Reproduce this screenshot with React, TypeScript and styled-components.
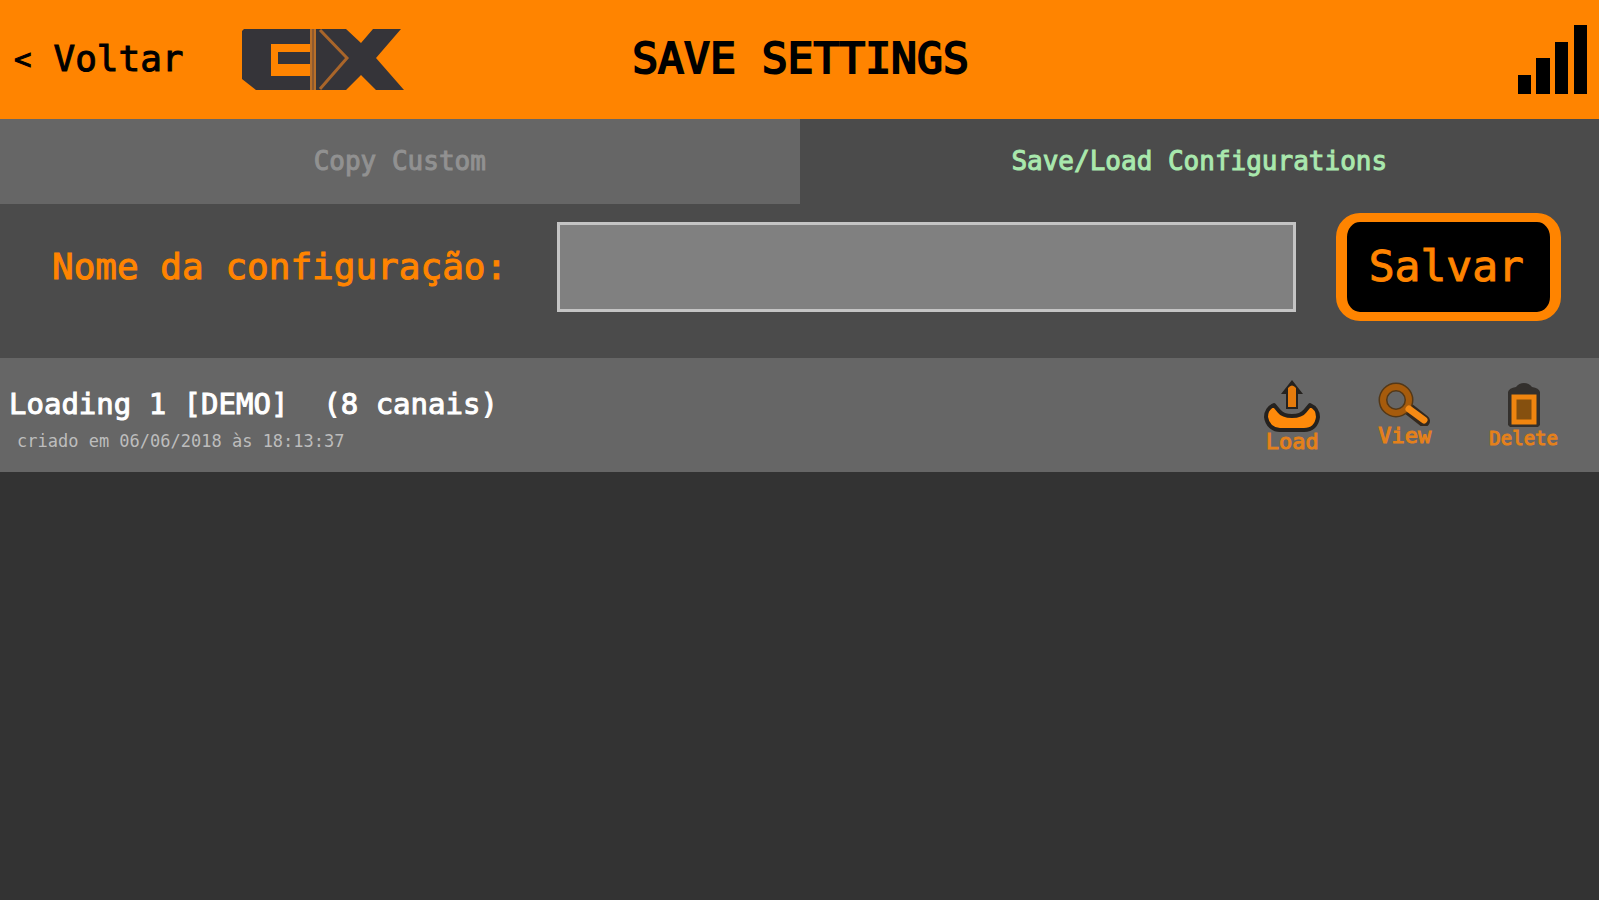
import React, { useState } from "react";
import styled, { createGlobalStyle } from "styled-components";

const orange = "#ff8400";

const GlobalStyle = createGlobalStyle`
  *, *::before, *::after { box-sizing: border-box; }
  body {
    margin: 0;
    background: #333333;
    font-family: "DejaVu Sans Mono", "Liberation Mono", monospace;
  }
  button, input { font-family: inherit; }
`;

const Screen = styled.div`
  display: flex;
  flex-direction: column;
  min-height: 100vh;
  -webkit-text-stroke: 1px currentColor;
`;

const Header = styled.header`
  display: grid;
  grid-template-columns: 1fr auto 1fr;
  align-items: center;
  height: 119px;
  padding: 0 12px 0 14px;
  background: ${orange};
  color: #000000;
`;

const HeaderStart = styled.div`
  display: flex;
  align-items: center;
  gap: 58px;
`;

const BackLink = styled.a`
  display: flex;
  align-items: center;
  gap: 22px;
  padding-bottom: 2px;
  color: inherit;
  font-size: 36px;
  line-height: 42px;
  text-decoration: none;
`;

const BackArrow = styled.span`
  font-size: 29px;
`;

const Title = styled.h1`
  margin: 0;
  padding-bottom: 4px;
  font-size: 43px;
  font-weight: normal;
  line-height: 50px;
  -webkit-text-stroke-width: 2px;
`;

const HeaderEnd = styled.div`
  display: flex;
  justify-content: flex-end;
`;

const Tabs = styled.div`
  display: grid;
  grid-template-columns: 1fr 1fr;
  background: #4b4b4b;
`;

const Tab = styled.button<{ $active: boolean }>`
  padding: 27px 0 28px;
  border: 0;
  background: ${({ $active }) => ($active ? "#4b4b4b" : "#666666")};
  color: ${({ $active }) => ($active ? "#a9e8ad" : "#919191")};
  font-size: 26px;
  line-height: 30px;
  cursor: pointer;
`;

const SaveForm = styled.form`
  display: flex;
  align-items: center;
  padding: 9px 38px 37px 52px;
  background: #4b4b4b;
`;

const NameLabel = styled.label`
  flex: none;
  margin-right: 50px;
  color: ${orange};
  font-size: 36px;
  line-height: 42px;
`;

const NameInput = styled.input`
  flex: 1;
  min-width: 0;
  height: 90px;
  padding: 0 20px;
  border: 3px solid #c4c4c4;
  outline: 0;
  background: #808080;
  color: #ffffff;
  font-size: 36px;
`;

const SaveButton = styled.button`
  flex: none;
  margin-left: 40px;
  padding: 19px 26px 21px 22px;
  border: solid ${orange};
  border-width: 9px 11px;
  border-radius: 24px;
  background: #000000;
  color: ${orange};
  font-size: 43px;
  line-height: 50px;
  cursor: pointer;
`;

const ConfigList = styled.ul`
  margin: 0;
  padding: 0;
  list-style: none;
`;

const ConfigRow = styled.li`
  display: flex;
  justify-content: space-between;
  padding: 22px 41px 20px 9px;
  background: #666666;
`;

const ConfigInfo = styled.div`
  display: flex;
  flex-direction: column;
  gap: 10px;
  padding-top: 7px;
`;

const ConfigName = styled.span`
  color: #ffffff;
  font-size: 29px;
  line-height: 34px;
  white-space: pre;
`;

const ConfigDate = styled.span`
  padding-left: 8px;
  color: #bdbdbd;
  font-size: 17px;
  line-height: 20px;
  -webkit-text-stroke-width: 0;
`;

const Actions = styled.div`
  display: flex;
  align-items: flex-start;
  gap: 58px;
`;

const ActionButton = styled.button<{ $compact?: boolean }>`
  display: flex;
  flex-direction: column;
  align-items: center;
  padding: 0;
  border: 0;
  background: none;
  color: #e5811a;
  font-size: ${({ $compact }) => ($compact ? 19 : 22)}px;
  line-height: 20px;
  cursor: pointer;
`;

const Logo = () => (
  <svg width="162" height="61" viewBox="0 0 162 61" role="img" aria-label="EX">
    <path
      fill="#353439"
      d="M2 0H104L119 14L131 0H159L134 29L162 61H134L119 46L104 61H14L0 50V2Z"
    />
    <path fill={orange} d="M29 15H69V23H36V35H69V47H29Z" />
    <path fill="none" stroke="#8d5a30" strokeWidth="6" d="M71 0V61" />
    <path fill="none" stroke="#b96f28" strokeWidth="2" d="M69 0V61M73 0V61" />
    <path fill="none" stroke="#a9652a" strokeWidth="3" d="M78 1L105 29L78 60" />
  </svg>
);

const SignalBars = () => (
  <svg width="69" height="69" viewBox="0 0 69 69" role="img" aria-label="Signal">
    <path d="M0 50H13V69H0ZM18 33H32V69H18ZM37 17H50V69H37ZM56 0H69V69H56Z" />
  </svg>
);

const LoadIcon = () => (
  <svg width="56" height="52" viewBox="0 0 56 52" aria-hidden="true">
    <path
      fill="#ff8a0a"
      stroke="#25221f"
      strokeWidth="4"
      strokeLinejoin="round"
      d="M10 25C5 27 2 32 2 37C3 45 9 50 16 50H40C48 50 53 45 54 37C54 32 51 27 46 25L41 31C38 35 34 36 28 36C22 36 18 35 15 31Z"
    />
    <path fill="#25221f" d="M28 0L39 14H34V29H22V14H17Z" />
    <path fill="#e57b0c" d="M24 8Q28 3 32 8V27H24Z" />
  </svg>
);

const ViewIcon = () => (
  <svg width="53" height="46" viewBox="0 0 53 46" aria-hidden="true">
    <path stroke="#33291f" strokeWidth="12" strokeLinecap="round" d="M32 30L46 41" />
    <circle cx="18" cy="20" r="13" fill="none" stroke="#543817" strokeWidth="9" />
    <circle cx="18" cy="20" r="13" fill="none" stroke="#a65b0c" strokeWidth="6" />
    <path stroke="#f58a14" strokeWidth="7" strokeLinecap="round" d="M31 29L46 40" />
  </svg>
);

const DeleteIcon = () => (
  <svg width="32" height="48" viewBox="0 0 32 48" aria-hidden="true">
    <path fill="#33302d" d="M0 12Q1 8 8 7Q11 3 16 3Q21 3 24 7Q31 8 32 12V45L30 47H2L0 45Z" />
    <rect x="6" y="17" width="20" height="25" fill="#85500f" stroke="#f0850f" strokeWidth="5" />
  </svg>
);

const tabs = ["Copy Custom", "Save/Load Configurations"];

const configs = [
  { name: "Loading 1 [DEMO]  (8 canais)", created: "criado em 06/06/2018 às 18:13:37" },
];

export default function App() {
  const [activeTab, setActiveTab] = useState(1);
  const [name, setName] = useState("");

  return (
    <Screen>
      <GlobalStyle />
      <Header>
        <HeaderStart>
          <BackLink href="#">
            <BackArrow>&lt;</BackArrow>
            Voltar
          </BackLink>
          <Logo />
        </HeaderStart>
        <Title>SAVE SETTINGS</Title>
        <HeaderEnd>
          <SignalBars />
        </HeaderEnd>
      </Header>
      <Tabs role="tablist">
        {tabs.map((tab, index) => (
          <Tab
            key={tab}
            type="button"
            role="tab"
            aria-selected={index === activeTab}
            $active={index === activeTab}
            onClick={() => setActiveTab(index)}
          >
            {tab}
          </Tab>
        ))}
      </Tabs>
      <main>
        <SaveForm onSubmit={(event) => event.preventDefault()}>
          <NameLabel htmlFor="config-name">Nome da configuração:</NameLabel>
          <NameInput
            id="config-name"
            type="text"
            value={name}
            onChange={(event) => setName(event.target.value)}
          />
          <SaveButton type="submit">Salvar</SaveButton>
        </SaveForm>
        <ConfigList>
          {configs.map((config) => (
            <ConfigRow key={config.name}>
              <ConfigInfo>
                <ConfigName>{config.name}</ConfigName>
                <ConfigDate>{config.created}</ConfigDate>
              </ConfigInfo>
              <Actions>
                <ActionButton type="button">
                  <LoadIcon />
                  Load
                </ActionButton>
                <ActionButton type="button">
                  <ViewIcon />
                  View
                </ActionButton>
                <ActionButton type="button" $compact>
                  <DeleteIcon />
                  Delete
                </ActionButton>
              </Actions>
            </ConfigRow>
          ))}
        </ConfigList>
      </main>
    </Screen>
  );
}
